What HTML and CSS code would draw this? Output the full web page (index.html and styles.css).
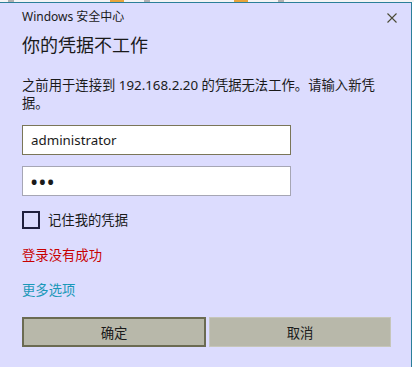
FILE: index.html
```html
<!DOCTYPE html>
<html lang="zh-CN">
<head>
  <meta charset="UTF-8" />
  <meta name="viewport" content="width=device-width, initial-scale=1.0" />
  <title>Windows 安全中心</title>
  <link rel="stylesheet" href="styles.css">
</head>
<body>
  <div class="desktop-strip">
    <span class="blip grey" style="margin-left:8px"></span>
    <span class="blip orange" style="margin-left:96px"></span>
    <span class="blip grey" style="margin-left:20px"></span>
    <span class="blip orange" style="margin-left:84px"></span>
    <span class="blip grey" style="margin-left:30px"></span>
  </div>
  <div class="dialog">
    <div class="title-bar">
      <span class="title">Windows 安全中心</span>
      <button class="close-btn" aria-label="关闭">
        <svg width="10" height="10" viewBox="0 0 10 10">
          <path d="M0.5 0.5 L9.5 9.5 M9.5 0.5 L0.5 9.5" stroke="#4a4a35" stroke-width="1.1" fill="none"/>
        </svg>
      </button>
    </div>
    <h1 class="heading">你的凭据不工作</h1>
    <p class="message">之前用于连接到 192.168.2.20 的凭据无法工作。请输入新凭据。</p>
    <input class="field focused" type="text" value="administrator">
    <input class="field secret" type="password" value="abc">
    <label class="remember">
      <span class="checkbox"></span>
      <span>记住我的凭据</span>
    </label>
    <div class="error">登录没有成功</div>
    <a class="more" href="#">更多选项</a>
    <div class="buttons">
      <button class="btn primary">确定</button>
      <button class="btn">取消</button>
    </div>
  </div>
</body>
</html>
```

FILE: styles.css
```css
* {
  box-sizing: border-box;
}
body {
  margin: 0;
  background: #ffffff;
  font-family: 'Noto Sans', 'Noto Sans CJK SC', sans-serif;
  color: #1a1a1a;
  font-size: 13.33px;
}
.desktop-strip {
  height: 2px;
  display: flex;
  background: #f4f4f4;
}
.blip {
  display: block;
  height: 2px;
  width: 14px;
}
.blip.orange {
  background: #e8a43a;
}
.blip.grey {
  background: #b0b0b0;
  width: 6px;
}
.dialog {
  width: 412px;
  height: 365px;
  background: #dcdcfe;
  border-top: 1px solid #2b7f99;
  border-right: 1px solid #2b7f99;
  padding: 0 20px 0 22px;
  display: flex;
  flex-direction: column;
  align-items: flex-start;
}
.title-bar {
  width: 100%;
  height: 28px;
  display: flex;
  align-items: center;
  justify-content: space-between;
}
.title {
  font-size: 12px;
  line-height: 16px;
  color: #1a1a1a;
}
.close-btn {
  border: none;
  background: none;
  padding: 0;
  margin-right: -6px;
  width: 10px;
  height: 10px;
  display: flex;
  margin-top: 1px;
}
.heading {
  margin: 2px 0 0;
  font-size: 18px;
  font-weight: normal;
  line-height: 24px;
}
.message {
  margin: 19px 0 0;
  line-height: 18px;
  width: 100%;
}
.field {
  margin-top: 13px;
  width: 269px;
  height: 30px;
  border: 1px solid #a6a6b4;
  background: #ffffff;
  padding: 0 8px;
  font-family: inherit;
  font-size: 13.33px;
  color: #1a1a1a;
  outline: none;
}
.field + .field {
  margin-top: 11px;
}
.field.focused {
  border-color: #7a7658;
}
.field.secret {
  font-size: 22px;
  letter-spacing: 0;
  padding-left: 7px;
}
.remember {
  margin-top: 15px;
  display: flex;
  align-items: center;
  gap: 8px;
  line-height: 18px;
}
.checkbox {
  width: 18px;
  height: 18px;
  border: 2px solid #20203e;
}
.error {
  margin-top: 17px;
  color: #c80000;
  line-height: 18px;
}
.more {
  margin-top: 17px;
  color: #1a98b8;
  text-decoration: none;
  line-height: 18px;
}
.buttons {
  margin-top: 18px;
  width: 100%;
  display: flex;
  gap: 3px;
}
.btn {
  flex: 1;
  height: 30px;
  background: #b8b8aa;
  border: 1px solid #c6c6ba;
  font-family: inherit;
  font-size: 13.33px;
  color: #1a1a1a;
  padding: 0;
}
.btn.primary {
  border: 2px solid #6b6b52;
}
```
